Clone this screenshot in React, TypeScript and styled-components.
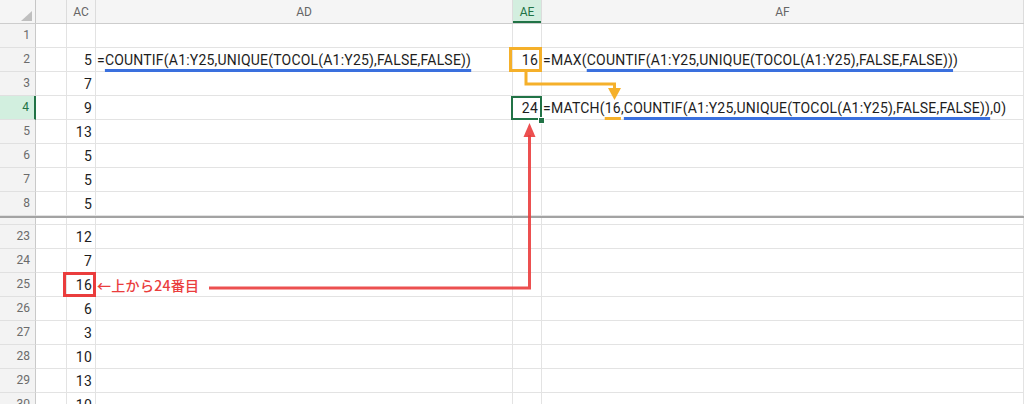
import React from "react"
import styled, { createGlobalStyle, css } from "styled-components"

const GlobalStyle = createGlobalStyle`
  html, body {
    margin: 0;
    padding: 0;
    background: #fff;
  }
  body {
    overflow: hidden;
  }
`

const BLUE = "#3a70de"
const ORANGE = "#f5b02a"
const RED = "#ea3d3d"
const GREEN = "#217346"

type Mark = "orange" | "red" | "active"

type RowData = {
  n: number
  ac?: string
  acMark?: Mark
  ad?: React.ReactNode
  ae?: string
  aeMark?: Mark
  af?: React.ReactNode
  active?: boolean
}

const COUNTIF = "COUNTIF(A1:Y25,UNIQUE(TOCOL(A1:Y25),FALSE,FALSE))"

const topRows: RowData[] = [
  { n: 1 },
  {
    n: 2,
    ac: "5",
    ad: (
      <>
        =<Underline $c={BLUE}>{COUNTIF}</Underline>
      </>
    ),
    ae: "16",
    aeMark: "orange",
    af: (
      <>
        =MAX(<Underline $c={BLUE}>{COUNTIF}</Underline>)
      </>
    ),
  },
  { n: 3, ac: "7" },
  {
    n: 4,
    ac: "9",
    ae: "24",
    aeMark: "active",
    active: true,
    af: (
      <>
        =MATCH(<Underline $c={ORANGE}>16</Underline>,<Underline $c={BLUE}>{COUNTIF}</Underline>,0)
      </>
    ),
  },
  { n: 5, ac: "13" },
  { n: 6, ac: "5" },
  { n: 7, ac: "5" },
  { n: 8, ac: "5" },
]

const bottomRows: RowData[] = [
  { n: 22, ac: "11" },
  { n: 23, ac: "12" },
  { n: 24, ac: "7" },
  { n: 25, ac: "16", acMark: "red", ad: <Note>←上から24番目</Note> },
  { n: 26, ac: "6" },
  { n: 27, ac: "3" },
  { n: 28, ac: "10" },
  { n: 29, ac: "13" },
  { n: 30, ac: "10" },
]

function Row({ r }: { r: RowData }) {
  return (
    <S.Row>
      <S.RowHead $active={r.active}>{r.n}</S.RowHead>
      <S.Cell $w={31} />
      <S.Cell $w={29} $right $mark={r.acMark}>
        {r.ac}
      </S.Cell>
      <S.Cell $w={417}>{r.ad}</S.Cell>
      <S.Cell $w={29} $right $mark={r.aeMark}>
        {r.ae}
      </S.Cell>
      <S.Cell>{r.af}</S.Cell>
    </S.Row>
  )
}

export default function App() {
  return (
    <>
      <GlobalStyle />
      <S.Sheet>
        <S.HeaderRow>
          <S.Corner />
          <S.ColHead $w={31} />
          <S.ColHead $w={29}>AC</S.ColHead>
          <S.ColHead $w={417}>AD</S.ColHead>
          <S.ColHead $w={29} $active>
            AE
          </S.ColHead>
          <S.ColHead>AF</S.ColHead>
        </S.HeaderRow>
        <S.Pane>
          {topRows.map((r) => (
            <Row key={r.n} r={r} />
          ))}
        </S.Pane>
        <S.Split />
        <S.BottomPane>
          <S.Scrolled>
            {bottomRows.map((r) => (
              <Row key={r.n} r={r} />
            ))}
          </S.Scrolled>
        </S.BottomPane>
        <S.Overlay width="1024" height="404" viewBox="0 0 1024 404">
          <path d="M526 72 V84 H614.5 V90" fill="none" stroke={ORANGE} strokeWidth="3" />
          <polygon points="608,88 621,88 614.5,100" fill={ORANGE} />
          <path d="M209 288 H529.5 V135" fill="none" stroke={RED} strokeWidth="3" opacity="0.9" />
          <polygon points="523.5,137 535.5,137 529.5,123" fill={RED} opacity="0.9" />
        </S.Overlay>
      </S.Sheet>
    </>
  )
}

function Underline({ $c, children }: { $c: string; children: React.ReactNode }) {
  return <S.Under $c={$c}>{children}</S.Under>
}

function Note({ children }: { children: React.ReactNode }) {
  return <S.Note>{children}</S.Note>
}

const box = (color: string) => css`
  &::after {
    content: "";
    position: absolute;
    top: -1px;
    right: -1px;
    bottom: -1px;
    left: -4px;
    border: 3px solid ${color};
  }
`

const markStyles = {
  orange: box(ORANGE),
  red: box(RED),
  active: css`
    &::after {
      content: "";
      position: absolute;
      top: 0;
      right: -1px;
      bottom: -1px;
      left: -2px;
      border: 2px solid ${GREEN};
    }
    &::before {
      content: "";
      position: absolute;
      right: -4px;
      bottom: -5px;
      width: 5px;
      height: 5px;
      background: ${GREEN};
      border: 1px solid #fff;
      z-index: 2;
    }
  `,
}

const S = {
  Sheet: styled.div`
    position: relative;
    width: 1024px;
    height: 404px;
    overflow: hidden;
    display: flex;
    flex-direction: column;
    font-family: Roboto, "Noto Sans", sans-serif;
    background: #fff;
  `,
  HeaderRow: styled.div`
    display: flex;
    flex: none;
    height: 24px;
    box-sizing: border-box;
    background: #f5f5f5;
    border-bottom: 1px solid #cdcdcd;
  `,
  Corner: styled.div`
    position: relative;
    width: 36px;
    flex: none;
    box-sizing: border-box;
    border-right: 1px solid #c6c6c6;
    &::after {
      content: "";
      position: absolute;
      right: 3px;
      bottom: 2px;
      width: 0;
      height: 0;
      border-left: 11px solid transparent;
      border-bottom: 10px solid #bfbfbf;
    }
  `,
  ColHead: styled.div<{ $w?: number; $active?: boolean }>`
    ${(p) => (p.$w ? `width: ${p.$w}px; flex: none;` : "flex: 1;")}
    box-sizing: border-box;
    display: flex;
    align-items: center;
    justify-content: center;
    border-right: 1px solid #dcdcdc;
    font-size: 12px;
    color: #666;
    ${(p) =>
      p.$active &&
      css`
        background: #d3eedf;
        color: ${GREEN};
        box-shadow: inset 0 -2px 0 ${GREEN};
      `}
  `,
  Pane: styled.div`
    flex: none;
    display: flex;
    flex-direction: column;
  `,
  Split: styled.div`
    flex: none;
    height: 2px;
    background: #a3a3a3;
  `,
  BottomPane: styled.div`
    flex: 1;
    overflow: hidden;
  `,
  Scrolled: styled.div`
    display: flex;
    flex-direction: column;
    margin-top: -17px;
  `,
  Row: styled.div`
    display: flex;
    flex: none;
    height: 24px;
  `,
  RowHead: styled.div<{ $active?: boolean }>`
    width: 36px;
    flex: none;
    box-sizing: border-box;
    background: #f3f3f3;
    border-right: 1px solid #c9c9c9;
    border-bottom: 1px solid #e0e0e0;
    font-size: 12px;
    line-height: 23px;
    color: #6b6b6b;
    text-align: right;
    padding-right: 5px;
    ${(p) =>
      p.$active &&
      css`
        background: #d2efdf;
        color: ${GREEN};
        border-right: 2px solid ${GREEN};
      `}
  `,
  Cell: styled.div<{ $w?: number; $right?: boolean; $mark?: Mark }>`
    ${(p) => (p.$w ? `width: ${p.$w}px; flex: none;` : "flex: 1;")}
    position: relative;
    box-sizing: border-box;
    border-right: 1px solid #e3e3e3;
    border-bottom: 1px solid #e3e3e3;
    padding: 1px ${(p) => (p.$right ? "3px" : "0")} 0 ${(p) => (p.$right ? "0" : "1px")};
    text-align: ${(p) => (p.$right ? "right" : "left")};
    font-size: 14px;
    letter-spacing: 0.2px;
    line-height: 22px;
    color: #1d1d1d;
    white-space: nowrap;
    ${(p) => p.$mark && markStyles[p.$mark]}
  `,
  Under: styled.span<{ $c: string }>`
    text-decoration-line: underline;
    text-decoration-color: ${(p) => p.$c};
    text-decoration-thickness: 3px;
    text-underline-offset: 4px;
    text-decoration-skip-ink: none;
  `,
  Note: styled.span`
    font-family: "Noto Sans CJK JP", "Noto Sans", sans-serif;
    font-size: 14px;
    font-weight: 500;
    letter-spacing: 0.3px;
    color: ${RED};
  `,
  Overlay: styled.svg`
    position: absolute;
    top: 0;
    left: 0;
    pointer-events: none;
  `,
}
